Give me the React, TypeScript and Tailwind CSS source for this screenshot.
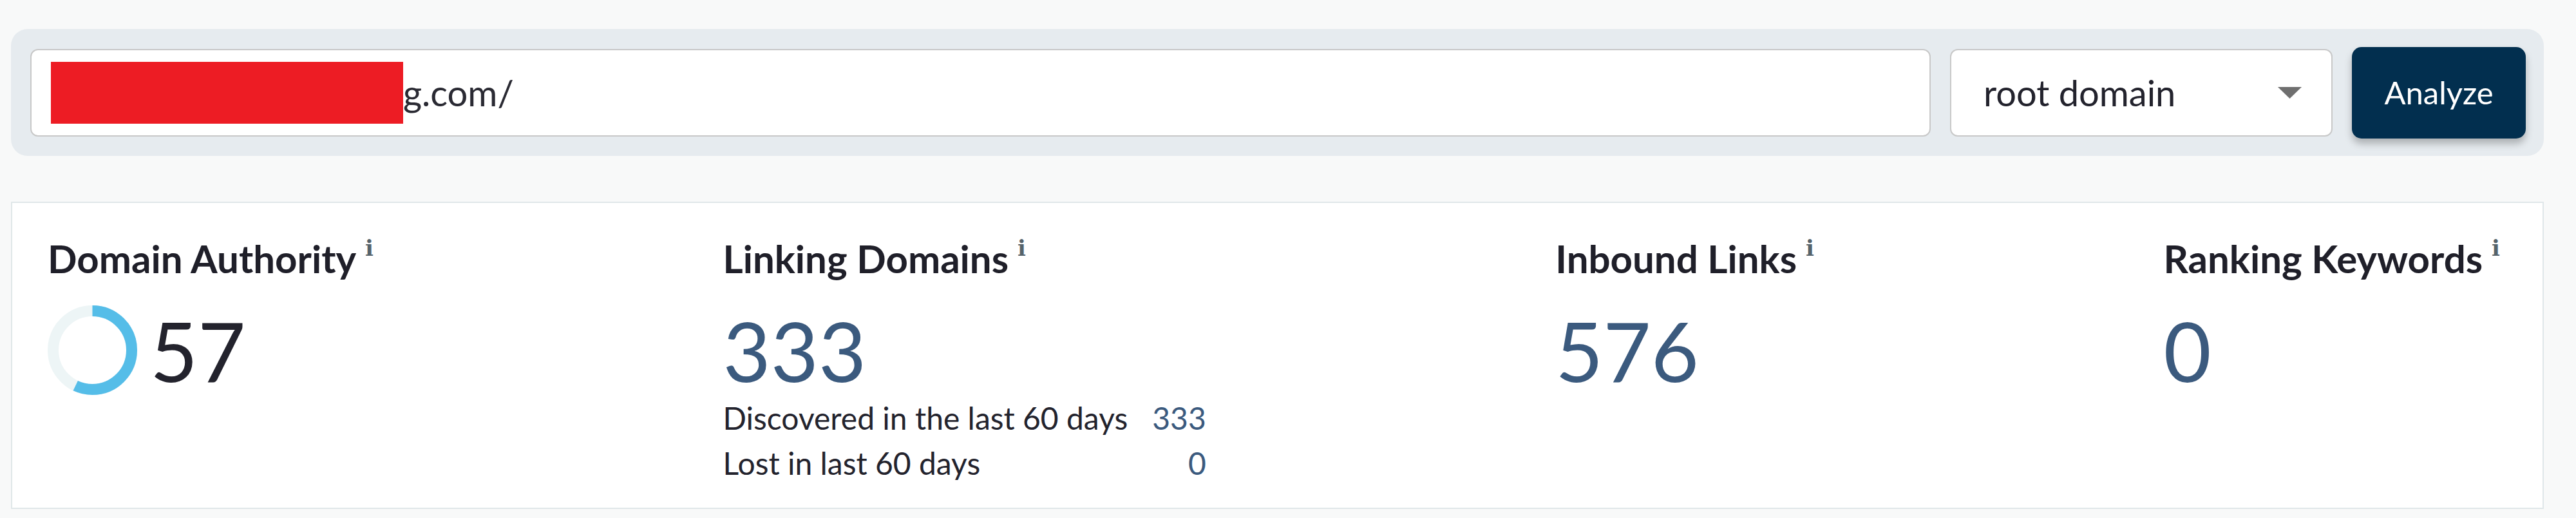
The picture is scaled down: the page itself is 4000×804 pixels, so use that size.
import React from "react";

function Info() {
  return (
    <span className="ml-[14px] mt-[3px] self-start font-['DejaVu_Serif',serif] text-[34px] font-bold leading-none text-[#56636b]">
      i
    </span>
  );
}

function Heading({ children }: { children: React.ReactNode }) {
  return (
    <div className="flex h-[72px] items-start">
      <span className="text-[60px] font-bold leading-[72px] text-[#1f1f29]">{children}</span>
      <Info />
    </div>
  );
}

function Donut({ value }: { value: number }) {
  const r = 61;
  const c = 2 * Math.PI * r;
  return (
    <svg width="139" height="139" viewBox="0 0 139 139" className="shrink-0">
      <circle cx="69.5" cy="69.5" r={r} fill="none" stroke="#edf5f6" strokeWidth="17" />
      <circle
        cx="69.5"
        cy="69.5"
        r={r}
        fill="none"
        stroke="#55bde8"
        strokeWidth="17"
        strokeDasharray={`${(c * value) / 100} ${c}`}
        transform="rotate(-90 69.5 69.5)"
      />
    </svg>
  );
}

function BigNumber({ children, dark }: { children: React.ReactNode; dark?: boolean }) {
  return (
    <span
      className={
        dark
          ? "text-[128px] font-normal leading-none text-[#23232d]"
          : "text-[128px] font-normal leading-none text-[#3b5a7e]"
      }
    >
      {children}
    </span>
  );
}

export default function App() {
  return (
    <div className="min-h-[804px] w-[4000px] bg-[#f8f9f9] font-['Lato','Liberation_Sans',sans-serif]">
      <div className="pl-[17px] pr-[50px] pt-[45px]">
        {/* search bar panel */}
        <div className="flex h-[197px] items-center gap-[30px] rounded-[26px] bg-[#e6ebef] pl-[30px] pr-[28px]">
          <div className="flex h-[136px] flex-1 items-center rounded-[12px] border-2 border-[#c8c8c8] bg-white pl-[30px]">
            <span className="inline-block h-[96px] w-[547px] bg-[#ed1c24]" />
            <span className="text-[56px] leading-none text-[#2a2a33]">g.com/</span>
          </div>
          <div className="flex h-[136px] w-[594px] items-center justify-between rounded-[12px] border-2 border-[#c8c8c8] bg-white pl-[50px] pr-[46px]">
            <span className="text-[56px] leading-none text-[#23232d]">root domain</span>
            <svg width="37" height="18" viewBox="0 0 37 18">
              <polygon points="0,0 37,0 18.5,18" fill="#6f6f6f" />
            </svg>
          </div>
          <button className="flex h-[142px] w-[270px] items-center justify-center rounded-[15px] bg-[#022f4f] text-[49px] text-white shadow-[0_8px_12px_rgba(0,0,0,0.25)]">
            Analyze
          </button>
        </div>

        {/* metrics card */}
        <div className="mt-[71px] flex h-[477px] justify-between border-2 border-[#e0e7e9] bg-white pb-[34px] pl-[55px] pr-[66px] pt-[50px]">
          {/* Domain Authority */}
          <div className="flex flex-col">
            <Heading>Domain Authority</Heading>
            <div className="mt-[36px] flex h-[141px] items-center gap-[20px]">
              <Donut value={57} />
              <BigNumber dark>57</BigNumber>
            </div>
          </div>

          {/* Linking Domains */}
          <div className="flex flex-col">
            <Heading>Linking Domains</Heading>
            <div className="mt-[36px] flex h-[141px] items-center">
              <BigNumber>333</BigNumber>
            </div>
            <div className="grid grid-cols-[auto_auto] gap-x-[38px] text-[48px] leading-[70px]">
              <span className="text-[#23232d]">Discovered in the last 60 days</span>
              <span className="text-right text-[#3b5a7e]">333</span>
              <span className="text-[#23232d]">Lost in last 60 days</span>
              <span className="text-right text-[#3b5a7e]">0</span>
            </div>
          </div>

          {/* Inbound Links */}
          <div className="flex flex-col">
            <Heading>Inbound Links</Heading>
            <div className="mt-[36px] flex h-[141px] items-center">
              <BigNumber>576</BigNumber>
            </div>
          </div>

          {/* Ranking Keywords */}
          <div className="flex flex-col">
            <Heading>Ranking Keywords</Heading>
            <div className="mt-[36px] flex h-[141px] items-center">
              <BigNumber>0</BigNumber>
            </div>
          </div>
        </div>
      </div>
    </div>
  );
}
